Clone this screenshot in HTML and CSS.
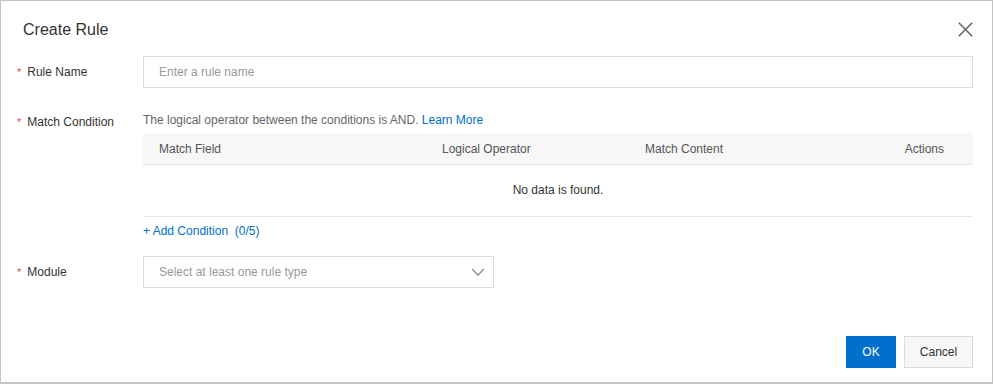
FILE: index.html
```html
<!DOCTYPE html>
<html lang="en">
<head>
  <meta charset="UTF-8" />
  <title>Create Rule</title>
  <link rel="stylesheet" href="styles.css">
</head>
<body>

  <div class="dialog">
    <div class="dialog-header">
      <span class="dialog-title">Create Rule</span>
      <span class="dialog-close">
        <svg width="15" height="15" viewBox="0 0 15 15"><path d="M0.8 0.8 L14.2 14.2 M14.2 0.8 L0.8 14.2" stroke="#666" stroke-width="1.6" fill="none"/></svg>
      </span>
    </div>

    <div class="dialog-body">
      <div class="form-row">
        <label class="form-label"><span class="req">*</span>Rule Name</label>
        <div class="form-control">
          <div class="input"><span class="placeholder">Enter a rule name</span></div>
        </div>
      </div>

      <div class="form-row cond-row">
        <label class="form-label"><span class="req">*</span>Match Condition</label>
        <div class="form-control">
          <div class="help">The logical operator between the conditions is AND. <a href="#" class="link">Learn More</a></div>
          <div class="table">
            <div class="table-head">
              <span class="col-field">Match Field</span>
              <span class="col-op">Logical Operator</span>
              <span class="col-content">Match Content</span>
              <span class="col-actions">Actions</span>
            </div>
            <div class="table-empty">No data is found.</div>
          </div>
          <a href="#" class="link add-link">+ Add Condition&nbsp;&nbsp;(0/5)</a>
        </div>
      </div>

      <div class="form-row module-row">
        <label class="form-label"><span class="req">*</span>Module</label>
        <div class="form-control">
          <div class="select">
            <span class="placeholder">Select at least one rule type</span>
            <svg width="14" height="8" viewBox="0 0 14 8"><path d="M1 1 L7 7 L13 1" stroke="#888" stroke-width="1.3" fill="none"/></svg>
          </div>
        </div>
      </div>
    </div>

    <div class="dialog-footer">
      <button class="btn btn-primary">OK</button>
      <button class="btn btn-normal">Cancel</button>
    </div>
  </div>

</body>
</html>
```

FILE: styles.css
```css
body {
  margin: 0;
  padding: 0;
  background: #fff;
  font-family: 'Liberation Sans', Arial, sans-serif;
  font-size: 12px;
  color: #333;
}
.dialog {
  width: 991px;
  height: 381px;
  border: 1px solid #c4c4c4;
  border-bottom-width: 2px;
  background: #fff;
  display: flex;
  flex-direction: column;
}
.dialog-header {
  display: flex;
  align-items: center;
  justify-content: space-between;
  padding: 18px 19px 0 22px;
  height: 22px;
}
.dialog-title {
  font-size: 16px;
  color: #333;
}
.dialog-close {
  display: flex;
  align-self: flex-start;
  margin-top: 3px;
}
.dialog-body {
  padding: 15px 19px 0 16px;
  flex: 1;
}
.form-row {
  display: flex;
}
.form-label {
  width: 126px;
  flex-shrink: 0;
  color: #333;
  line-height: 33px;
}
.req {
  color: #e05050;
  margin-right: 6px;
  font-size: 11px;
}
.form-control {
  flex: 1;
}
.input, .select {
  height: 30px;
  border: 1px solid #dcdcdc;
  display: flex;
  align-items: center;
  padding: 0 8px 0 15px;
}
.placeholder {
  color: #999;
}
.cond-row {
  margin-top: 23px;
}
.cond-row .form-label {
  line-height: 16px;
  margin-top: 2px;
}
.help {
  color: #666;
  line-height: 16px;
  margin-bottom: 5px;
}
.link {
  color: #0070cc;
  text-decoration: none;
}
.table-head {
  display: flex;
  height: 31px;
  align-items: center;
  background: #f7f7f7;
  border-bottom: 1px solid #e6e6e6;
  color: #555;
}
.col-field {
  padding-left: 16px;
  width: 283px;
}
.col-op {
  width: 203px;
}
.col-content {
  flex: 1;
}
.col-actions {
  padding-right: 29px;
}
.table-empty {
  height: 51px;
  line-height: 51px;
  text-align: center;
  border-bottom: 1px solid #e6e6e6;
}
.add-link {
  display: inline-block;
  margin-top: 6px;
  line-height: 16px;
}
.module-row {
  margin-top: 17px;
}
.select {
  width: 326px;
  justify-content: space-between;
}
.dialog-footer {
  display: flex;
  justify-content: flex-end;
  gap: 8px;
  padding: 0 19px 14px 0;
}
.btn {
  height: 32px;
  font-family: inherit;
  font-size: 12px;
  cursor: pointer;
}
.btn-primary {
  background: #0070cc;
  color: #fff;
  border: none;
  width: 50px;
  padding: 0;
}
.btn-normal {
  background: #f7f7f7;
  color: #333;
  border: 1px solid #dcdcdc;
  width: 69px;
  padding: 0;
}
```
